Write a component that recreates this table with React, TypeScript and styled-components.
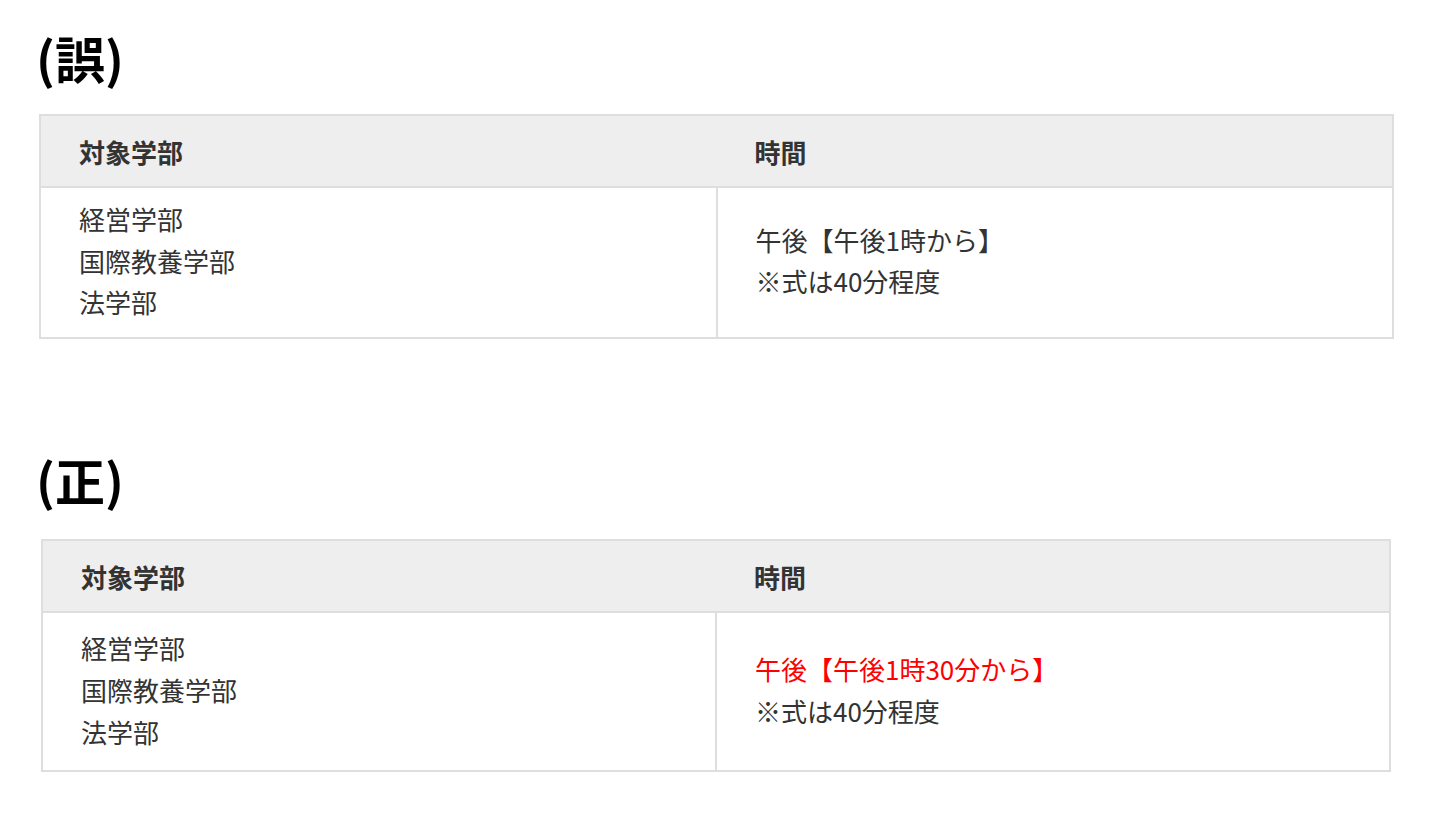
import React from 'react';
import styled, { createGlobalStyle } from 'styled-components';

const GlobalStyle = createGlobalStyle`
  html, body {
    margin: 0;
    padding: 0;
    background: #fff;
  }
  body {
    font-family: 'Noto Sans CJK JP', 'Noto Sans', sans-serif;
    color: #333;
  }
`;

type Section = {
  title: string;
  inset: [number, number];
  lineHeight: number;
  faculties: string[];
  time: string;
  changed: boolean;
};

const sections: Section[] = [
  {
    title: '(誤)',
    inset: [39, 46],
    lineHeight: 41.5,
    faculties: ['経営学部', '国際教養学部', '法学部'],
    time: '午後【午後1時から】',
    changed: false,
  },
  {
    title: '(正)',
    inset: [41, 49],
    lineHeight: 42,
    faculties: ['経営学部', '国際教養学部', '法学部'],
    time: '午後【午後1時30分から】',
    changed: true,
  },
];

const App: React.FC = () => {
  return (
    <Page>
      <GlobalStyle />
      {sections.map(section => (
        <Block key={section.title}>
          <Heading $roomy={section.changed}>{section.title}</Heading>
          <Table $left={section.inset[0]} $right={section.inset[1]}>
            <thead>
              <tr>
                <Th>対象学部</Th>
                <Th>時間</Th>
              </tr>
            </thead>
            <tbody>
              <tr>
                <Td $roomy={section.changed}>
                  {section.faculties.map(f => (
                    <Line key={f} $lh={section.lineHeight}>
                      {f}
                    </Line>
                  ))}
                </Td>
                <Td $roomy={section.changed}>
                  <Line $lh={section.lineHeight} $red={section.changed}>
                    {section.time}
                  </Line>
                  <Line $lh={section.lineHeight}>※式は40分程度</Line>
                </Td>
              </tr>
            </tbody>
          </Table>
        </Block>
      ))}
    </Page>
  );
};

const Page = styled.div`
  padding-top: 26px;
  display: flex;
  flex-direction: column;
  gap: 109px;
`;

const Block = styled.section`
  display: flex;
  flex-direction: column;
`;

const Heading = styled.h2<{ $roomy?: boolean }>`
  margin: 0 0 ${p => (p.$roomy ? 29 : 26)}px 36px;
  font-size: 50px;
  line-height: 62px;
  font-weight: 700;
  color: #000;
`;

const Table = styled.table<{ $left: number; $right: number }>`
  margin: 0 ${p => p.$right}px 0 ${p => p.$left}px;
  border-collapse: collapse;
  border: 2px solid #dedede;
  table-layout: fixed;
  font-size: 26px;
`;

const Th = styled.th`
  width: 50%;
  background: #eeeeee;
  border-bottom: 2px solid #dedede;
  padding: 17px 38px 16px 38px;
  text-align: left;
  font-weight: 700;
  line-height: 37px;
  color: #333;
`;

const Td = styled.td<{ $roomy?: boolean }>`
  border: 2px solid #dedede;
  padding: ${p => (p.$roomy ? '14px 38px 17px' : '10px 38px 14px')};
  vertical-align: middle;
  color: #333;
`;

const Line = styled.div<{ $red?: boolean; $lh: number }>`
  line-height: ${p => p.$lh}px;
  color: ${p => (p.$red ? '#ff0000' : 'inherit')};
`;

export default App;
